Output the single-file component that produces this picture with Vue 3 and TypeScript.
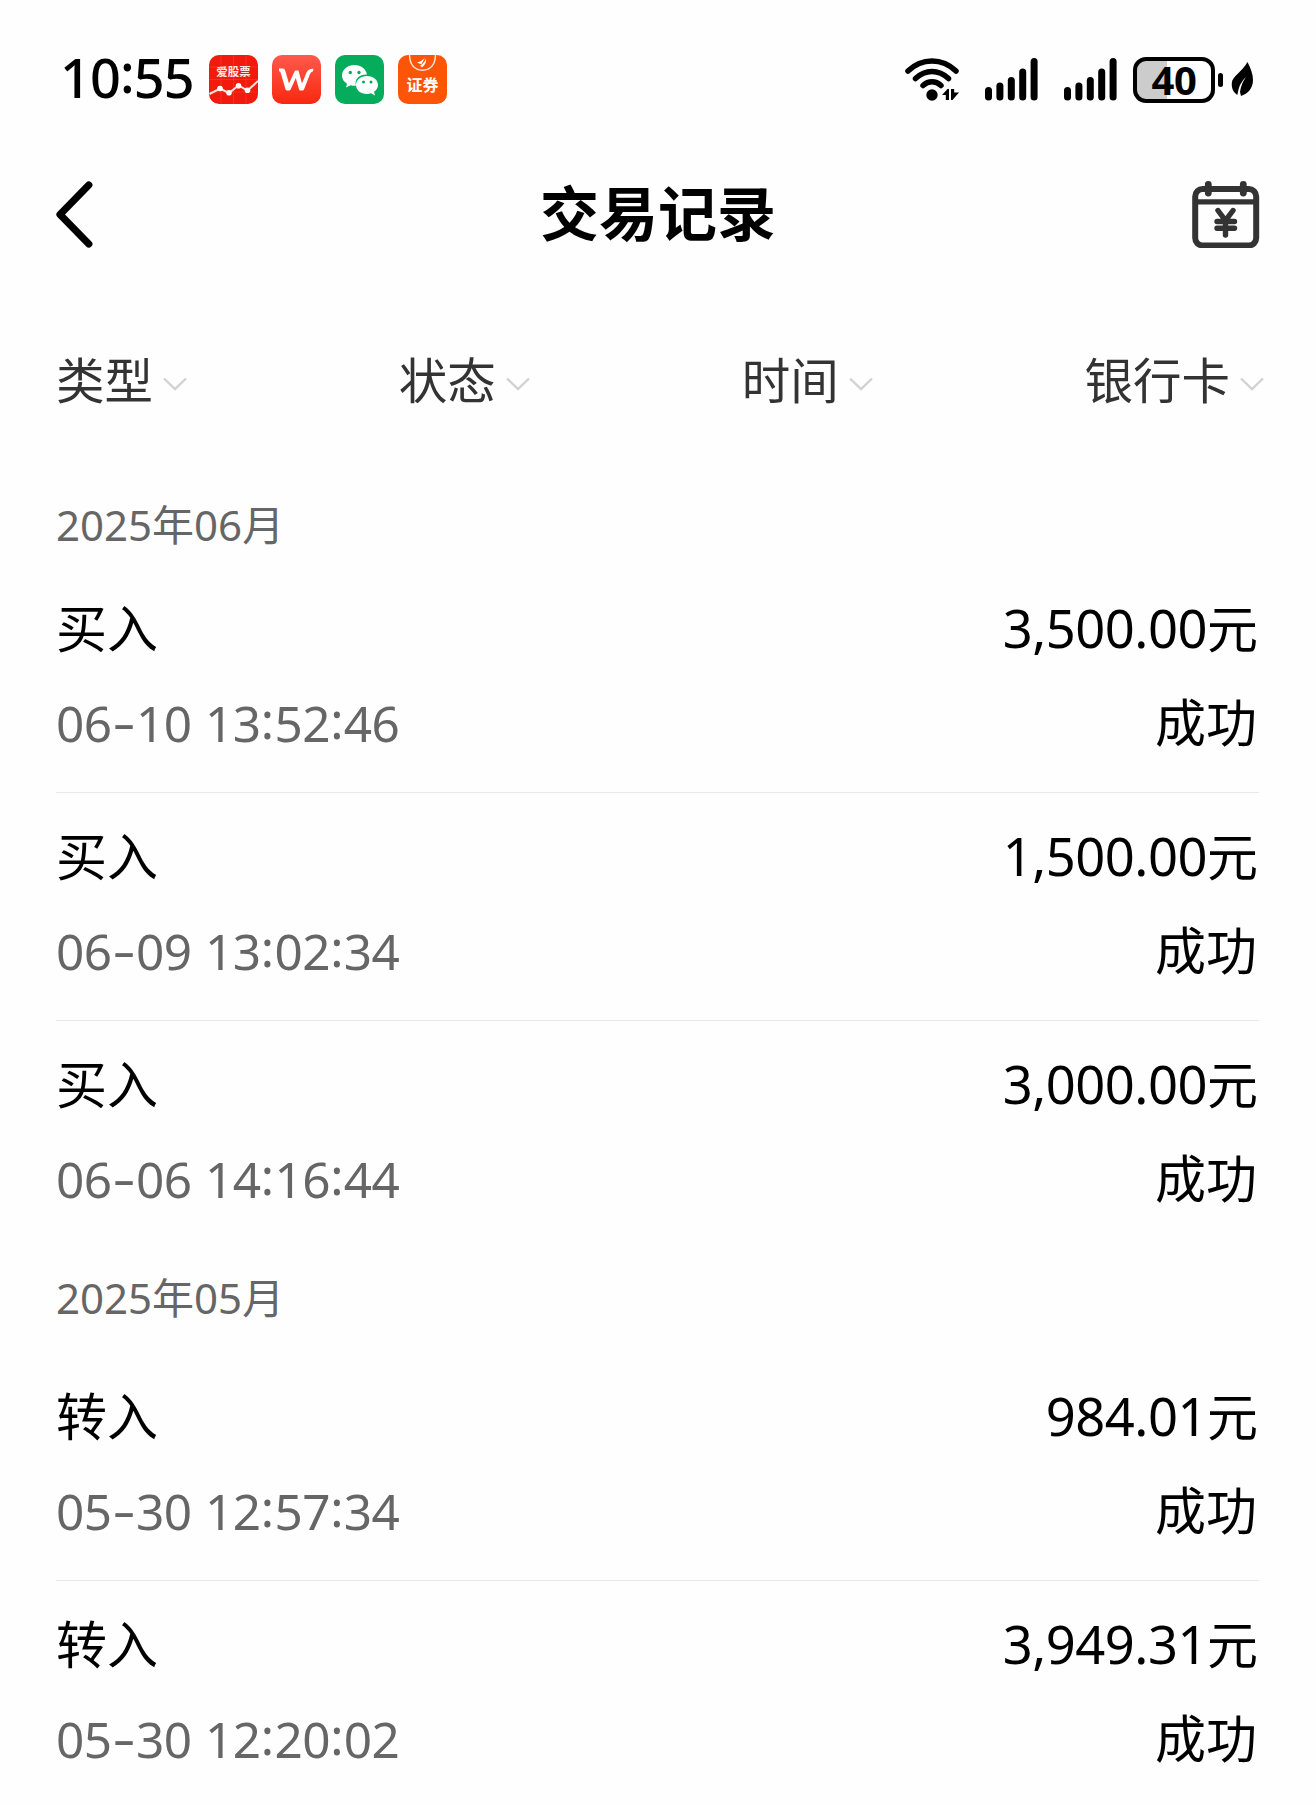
<script setup lang="ts">
interface TradeRecord {
  type: string
  day: string
  time: string
  amount: string
  status: string
}

interface MonthGroup {
  label: string
  records: TradeRecord[]
}

const filters: string[] = ['类型', '状态', '时间', '银行卡']

const groups: MonthGroup[] = [
  {
    label: '2025年06月',
    records: [
      { type: '买入', day: '06-10', time: '13:52:46', amount: '3,500.00', status: '成功' },
      { type: '买入', day: '06-09', time: '13:02:34', amount: '1,500.00', status: '成功' },
      { type: '买入', day: '06-06', time: '14:16:44', amount: '3,000.00', status: '成功' },
    ],
  },
  {
    label: '2025年05月',
    records: [
      { type: '转入', day: '05-30', time: '12:57:34', amount: '984.01', status: '成功' },
      { type: '转入', day: '05-30', time: '12:20:02', amount: '3,949.31', status: '成功' },
    ],
  },
]

const kind = (c: string): string => (c === '-' ? 'dash' : c === ':' ? 'colon' : c === ' ' ? 'space' : 'digit')
const stamp = (r: TradeRecord): string[] => Array.from(`${r.day} ${r.time}`)

// top of each signal bar, left to right
const bars: number[] = [29, 24.5, 19, 10.5, 0]
</script>

<template>
  <main class="screen">
    <header class="status">
      <div class="clock">10<span class="clock-colon">:</span>55</div>
      <div class="apps">
        <svg width="49" height="49" viewBox="0 0 49 49">
          <rect width="49" height="49" rx="10" fill="#f21a0c" />
          <path d="M12 0V49M24.500 0V49M37 0V49M0 12H49M0 24.500H49M0 37H49" stroke="#ff5a48" stroke-width=".6" opacity=".6" />
          <text x="24.500" y="20.500" text-anchor="middle" font-size="11.500" font-weight="700" fill="#ffe9e2">爱股票</text>
          <path d="M0.500 39L11 33.500L20 38L29.500 30.500L38.500 35.500L49 26" fill="none" stroke="#ffe3de" stroke-width="2" />
          <g fill="#fff"><circle cx="11" cy="33.500" r="2.800" /><circle cx="20" cy="37.800" r="2.800" /><circle cx="29.500" cy="30.700" r="2.800" /><circle cx="38.500" cy="35.300" r="2.800" /></g>
        </svg>
        <svg width="49" height="49" viewBox="0 0 49 49">
          <defs><linearGradient id="wg" x1="0" y1="0" x2="0" y2="1"><stop offset="0" stop-color="#ff5a4c" /><stop offset="1" stop-color="#f8280f" /></linearGradient></defs>
          <rect width="49" height="49" rx="10" fill="url(#wg)" />
          <path d="M7 13.500H11Q12.600 13.500 13 15L17 28.500L22.500 16.500Q23 15.500 24 15.500H26.500L30 28.500L34.500 17.500Q36 13.500 41.500 13.700L40.800 16.500Q39 16.500 38 19L32 34.500Q31.600 35.500 30.500 35.500H28.500Q27.300 35.500 27 34.300L23.800 23L18.600 34.500Q18.200 35.500 17 35.500H15Q13.800 35.500 13.500 34.300L8.600 17.500Q8.200 16.300 7 16.300Z" fill="#fff" />
        </svg>
        <svg width="49" height="49" viewBox="0 0 49 49">
          <rect width="49" height="49" rx="10" fill="#05ac5c" />
          <path d="M19.500 10C12.500 10 7 14.500 7 20.500C7 24 8.800 26.800 12 28.700L11 32.500L15.600 30.200Q19 31 21 30.600C19 24 24.500 19.200 32 19.400C31 14 26 10 19.500 10Z" fill="#fff" />
          <path d="M32 21C25.500 21 21 25 21 30C21 35 25.500 39 32 39Q34 39 36 38.300L40 40.500L39 36.800C41.500 35.200 43 32.700 43 30C43 25 38.500 21 32 21Z" fill="#fff" />
          <g fill="#05ac5c"><circle cx="15.300" cy="17.500" r="1.700" /><circle cx="24" cy="17.500" r="1.700" /><circle cx="28.500" cy="27" r="1.500" /><circle cx="36" cy="27" r="1.500" /></g>
        </svg>
        <svg width="49" height="49" viewBox="0 0 49 49">
          <rect width="49" height="49" rx="10" fill="#fc5508" />
          <path d="M11.500 0Q12 14.500 24.500 15.300Q37 14.500 37.500 0" fill="none" stroke="#ffe6d8" stroke-width="1.400" />
          <path d="M19 7.500Q24 6.500 27 2.500L23.500 9Q21 8.600 19 7.500ZM22 10.500Q26.500 8 28 3.500Q29 8.500 24 12.500Z" fill="#fff" />
          <text x="24.500" y="35.500" text-anchor="middle" font-size="16" font-weight="700" fill="#fff">证券</text>
        </svg>
      </div>
      <div class="indicators">
        <svg class="wifi" width="55" height="43" viewBox="0 0 55 43">
          <g fill="none" stroke="#000" stroke-width="5.500" stroke-linecap="round">
            <path d="M3 13Q13.500 3 27 3Q40.500 3 51 13" />
            <path d="M10.500 20.500Q18 13.500 27 13.500Q36 13.500 43.500 20.500" />
            <path d="M18 27.500Q22 23.800 27 23.800Q32 23.800 36 27.500" />
          </g>
          <circle cx="27" cy="37" r="5.700" />
          <path d="M37 37L42.500 31H44V42H40.800V37ZM46 31H49.200V34.500H54L47.500 42H46Z" />
        </svg>
        <svg v-for="n in 2" :key="n" class="signal" width="53" height="43" viewBox="0 0 53 43">
          <rect v-for="(top, i) in bars" :key="i" :x="i * 11.400" :y="top" width="7" :height="42.500 - top" rx="3.500" />
        </svg>
        <div class="battery">40</div>
        <i class="nub"></i>
        <svg class="leaf" width="23" height="36" viewBox="0 0 23 36">
          <path d="M16.500 1C20 8 22 13 22 19C22 28 16 33 10 35L9 31Q10 23 15 16Q8 22 6.300 34C2 31 .5 27 .8 22C1.300 15 11 11 16.500 1Z" />
        </svg>
      </div>
    </header>

    <nav class="titlebar">
      <svg width="40" height="70" viewBox="0 0 40 70"><path d="M32.800 6L4 35.500L32.800 65" fill="none" stroke="#000" stroke-width="7.200" stroke-linecap="round" stroke-linejoin="round" /></svg>
      <h1>交易记录</h1>
      <svg width="68" height="68" viewBox="0 0 68 68">
        <g fill="none" stroke="#333" stroke-width="6">
          <rect x="3.200" y="9" width="61" height="56.500" rx="7.500" />
          <path d="M3 21.800H65" stroke-width="5.200" />
          <path d="M16.300 4.500V13M51.300 4.500V13" stroke-width="6.800" stroke-linecap="round" />
          <path d="M26 30.500L33.500 40.500L41 30.500M33.500 40.500V55M25 41.500H42.500M25 48.300H42.500" stroke-width="5.400" stroke-linecap="round" />
        </g>
      </svg>
    </nav>

    <div class="filters">
      <button v-for="f in filters" :key="f" type="button">
        {{ f }}
        <svg width="24" height="14" viewBox="0 0 24 14"><path d="M1 1.500L12 12L23 1.500" fill="none" stroke="#d2d2d2" stroke-width="2.400" /></svg>
      </button>
    </div>

    <section v-for="g in groups" :key="g.label" class="group">
      <h2>{{ g.label }}</h2>
      <article v-for="(r, i) in g.records" :key="i" class="record">
        <div class="line">
          <span class="type">{{ r.type }}</span>
          <span class="amount">{{ r.amount }}<span class="unit">元</span></span>
        </div>
        <div class="line">
          <span class="stamp"><span v-for="(c, k) in stamp(r)" :key="k" :class="kind(c)">{{ c }}</span></span>
          <span class="state">{{ r.status }}</span>
        </div>
      </article>
    </section>
  </main>
</template>

<style>
body {
  margin: 0;
  background: #fefefe;
}
</style>

<style scoped>
.screen {
  box-sizing: border-box;
  width: 1316px;
  height: 1806px;
  overflow: hidden;
  background: #fefefe;
  color: #000;
  font-family: "Noto Sans CJK SC", sans-serif;
}
svg {
  display: block;
  flex: none;
}
.status {
  display: flex;
  align-items: center;
  height: 158px;
  padding: 0 62px 0 60px;
}
.clock {
  width: 149px;
  margin-top: -4px;
  font-family: "Noto Sans", "Noto Sans CJK SC", sans-serif;
  font-size: 54px;
  line-height: 60px;
  font-weight: 500;
  letter-spacing: -0.9px;
  white-space: nowrap;
}
.clock-colon {
  position: relative;
  top: -5px;
}
.apps {
  display: flex;
  gap: 14px;
}
.indicators {
  display: flex;
  align-items: center;
  margin-left: auto;
}
.wifi {
  margin-right: 25px;
}
.signal {
  margin-right: 26px;
}
.signal + .battery {
  margin-left: -10px;
}
.battery {
  box-sizing: border-box;
  width: 82px;
  height: 46px;
  margin-top: 2px;
  border: 4px solid #000;
  border-radius: 13px;
  background: linear-gradient(90deg, #ccc 30px, transparent 30px);
  font-family: "Noto Sans", "Noto Sans CJK SC", sans-serif;
  font-size: 40px;
  line-height: 37px;
  font-weight: 700;
  letter-spacing: -0.5px;
  text-align: center;
}
.nub {
  width: 5px;
  height: 14px;
  margin: 2px 8px 0 3px;
  border-radius: 3px;
  background: #000;
}
.titlebar {
  display: flex;
  align-items: center;
  justify-content: space-between;
  height: 112px;
  padding: 0 56px;
}
.titlebar h1 {
  margin: -7px -28px 0 0;
  font-size: 59px;
  line-height: 80px;
  font-weight: 700;
}
.filters {
  display: flex;
  justify-content: space-between;
  margin-top: 68px;
  padding: 0 52px 0 56px;
}
.filters button {
  display: flex;
  align-items: center;
  gap: 10px;
  padding: 0;
  border: 0;
  background: none;
  color: #333;
  font-family: inherit;
  font-size: 48.500px;
  line-height: 80px;
}
.filters svg {
  margin-top: 12px;
}
.group h2 {
  margin: 0;
  padding: 19px 57px 25px 56px;
  color: #666;
  font-family: "Noto Sans", "Noto Sans CJK SC", sans-serif;
  font-size: 42px;
  line-height: 60px;
  font-weight: 400;
}
.group:first-of-type h2 {
  padding-top: 77px;
  padding-bottom: 10px;
}
.record {
  display: flex;
  flex-direction: column;
  gap: 34px;
  margin: 0 57px 0 56px;
  padding: 31px 0 42px;
  border-bottom: 1px solid #e8e8e8;
}
.record:last-child {
  border-color: transparent;
}
.line {
  display: flex;
  justify-content: space-between;
  height: 60px;
  line-height: 60px;
  font-size: 51px;
}
.state {
  margin-right: 2px;
}
.amount {
  margin-right: 1px;
  font-family: "Noto Sans", "Noto Sans CJK SC", sans-serif;
  font-size: 52.500px;
  letter-spacing: -0.5px;
}
.unit {
  font-family: "Noto Sans CJK SC", sans-serif;
  font-size: 51px;
  letter-spacing: 0;
}
.stamp {
  display: flex;
  color: #666;
  font-family: "Noto Sans", "Noto Sans CJK SC", sans-serif;
  font-size: 49.500px;
  line-height: 66px;
}
.stamp span {
  width: 27.8px;
  text-align: center;
}
.stamp .colon {
  position: relative;
  top: -3px;
  width: 13.8px;
}
.stamp .space {
  width: 13.5px;
}
.stamp .dash {
  width: 24.3px;
  transform: translateY(-2px) scaleX(1.45);
}
</style>
